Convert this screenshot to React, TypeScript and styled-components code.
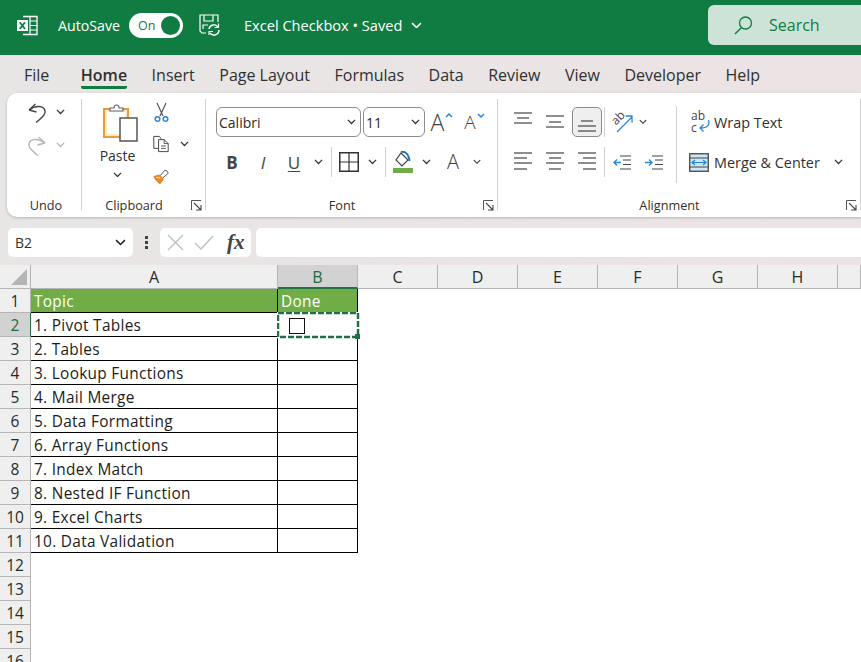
import React from "react";
import styled, { createGlobalStyle } from "styled-components";

const uiFont = `"Open Sans", "Noto Sans", "Liberation Sans", sans-serif`;
const GREEN = "#107c41";

const Global = createGlobalStyle`
  html, body { margin: 0; padding: 0; background: #fff; }
  * { box-sizing: border-box; }
`;

const Page = styled.div`
  width: 861px;
  height: 662px;
  overflow: hidden;
  font-family: ${uiFont};
  color: #303030;
  background: linear-gradient(90deg, #e8e6e5, #ece3e4);
`;

/* title bar */
const TitleBar = styled.header`
  height: 55px;
  background: ${GREEN};
  display: flex;
  align-items: center;
  color: #fff;
  padding: 0 0 5px 17px;
`;
const AutoSaveLabel = styled.span`
  font-size: 14.2px;
  margin-left: 20px;
  width: 71px;
`;
const Toggle = styled.div`
  width: 54px;
  height: 25px;
  border-radius: 13px;
  background: #fff;
  color: ${GREEN};
  font-size: 12.5px;
  display: flex;
  align-items: center;
  justify-content: space-between;
  padding: 0 3px 0 9px;
`;
const ToggleKnob = styled.i`
  width: 19px;
  height: 19px;
  border-radius: 50%;
  background: ${GREEN};
`;
const DocTitle = styled.span`
  font-size: 14.6px;
  margin-left: 24px;
  width: 167px;
  white-space: nowrap;
`;
const SearchBox = styled.div`
  margin-left: auto;
  width: 153px;
  height: 40px;
  background: #cee3d7;
  border-radius: 6px 0 0 6px;
  color: ${GREEN};
  font-size: 16px;
  display: flex;
  align-items: center;
  gap: 16px;
  padding-left: 26px;
`;

/* tabs */
const TabBar = styled.nav`
  height: 38px;
  display: flex;
  gap: 24.5px;
  padding: 8px 0 0 24px;
  font-size: 16px;
`;
const Tab = styled.span<{ $active?: boolean; $extra?: number }>`
  height: 26px;
  line-height: 24px;
  white-space: nowrap;
  margin-right: ${(p) => p.$extra ?? 0}px;
  font-weight: ${(p) => (p.$active ? 600 : 400)};
  border-bottom: 3px solid ${(p) => (p.$active ? GREEN : "transparent")};
  border-radius: 0 0 2px 2px;
`;

/* ribbon */
const Ribbon = styled.section`
  height: 124px;
  margin-left: 7px;
  background: #fff;
  border-radius: 10px 0 0 10px;
  box-shadow: 0 1px 3px rgba(0, 0, 0, 0.22);
  display: flex;
  font-size: 13px;
`;
const Group = styled.div<{ $w: number; $pad?: number }>`
  position: relative;
  width: ${(p) => p.$w}px;
  flex: none;
  display: flex;
  flex-direction: column;
  padding-top: ${(p) => p.$pad ?? 14}px;
  &::after {
    content: "";
    position: absolute;
    right: 0;
    top: 6px;
    bottom: 7px;
    width: 1px;
    background: #d0d0d0;
  }
`;
const GroupBody = styled.div`
  flex: 1;
  min-height: 0;
  display: flex;
`;
const GroupLabel = styled.div<{ $right?: number; $shift?: number }>`
  height: 24px;
  line-height: 24px;
  text-align: center;
  font-size: 12.7px;
  padding-right: ${(p) => p.$right ?? 20}px;
  padding-left: ${(p) => p.$shift ?? 0}px;
`;
const Launcher = styled.span`
  position: absolute;
  right: 4px;
  bottom: 6px;
  display: flex;
`;
const Rows = styled.div<{ $gap?: number; $left?: number; $top?: number; $w?: number }>`
  display: flex;
  flex-direction: column;
  gap: ${(p) => p.$gap ?? 10}px;
  margin-left: ${(p) => p.$left ?? 0}px;
  margin-top: ${(p) => p.$top ?? 0}px;
  ${(p) => (p.$w ? `width: ${p.$w}px; flex: none;` : "")}
`;
const Row = styled.div`
  display: flex;
  align-items: center;
  height: 30px;
`;
const Slot = styled.div<{ $w: number; $h?: number }>`
  width: ${(p) => p.$w}px;
  height: ${(p) => p.$h ?? 30}px;
  flex: none;
  display: flex;
  align-items: center;
  justify-content: center;
`;
const Sep = styled.i`
  width: 1px;
  height: 30px;
  background: #d0d0d0;
`;
const TallSep = styled.i`
  width: 1px;
  height: 77px;
  margin-top: -1px;
  flex: none;
  background: #d0d0d0;
`;
const Pressed = styled.div`
  width: 30px;
  height: 30px;
  border: 1px solid #8a8a8a;
  border-radius: 5px;
  background: #efefef;
  display: flex;
  align-items: center;
  justify-content: center;
`;
const PasteColumn = styled.div`
  width: 71px;
  flex: none;
  display: flex;
  flex-direction: column;
  align-items: center;
  font-size: 14px;
  svg:first-child {
    margin-left: 6px;
  }
`;
const PasteText = styled.span`
  margin: 4px 0 6px;
  line-height: 20px;
`;
const Select = styled.div<{ $w: number }>`
  width: ${(p) => p.$w}px;
  height: 30px;
  flex: none;
  border: 1px solid #8d8d8d;
  border-radius: 6px;
  display: flex;
  align-items: center;
  justify-content: space-between;
  padding: 0 4px 0 2px;
  font-size: 14px;
  color: #2b2b2b;
`;
const WrapLabel = styled.span`
  font-size: 14.4px;
  white-space: nowrap;
`;
const BoldGlyph = styled.span<{ $italic?: boolean; $under?: boolean }>`
  font-size: 17px;
  line-height: 1;
  font-weight: ${(p) => (p.$italic || p.$under ? 400 : 700)};
  font-style: ${(p) => (p.$italic ? "italic" : "normal")};
  text-decoration: ${(p) => (p.$under ? "underline" : "none")};
  text-underline-offset: 2px;
  color: #444;
`;
const BigA = styled.span<{ $size: number }>`
  font-size: ${(p) => p.$size}px;
  line-height: 1;
  color: #404040;
  font-weight: 300;
`;
const OrientBox = styled.div`
  position: relative;
  width: 21px;
  height: 21px;
  svg {
    position: absolute;
    left: 0;
    top: 0;
  }
`;
const OrientText = styled.span`
  position: absolute;
  left: -1px;
  top: 0;
  font-size: 12px;
  line-height: 12px;
  color: #444;
  transform: rotate(-45deg);
`;
const WrapBox = styled.div`
  position: relative;
  width: 19px;
  height: 24px;
  font-size: 12px;
  line-height: 12px;
  color: #444;
  svg {
    position: absolute;
    left: 0;
    top: 0;
  }
`;
const WrapLetters = styled.span`
  display: block;
  white-space: nowrap;
`;

/* formula bar */
const FormulaBar = styled.div`
  height: 48px;
  padding: 11px 0 8px 8px;
  display: flex;
  align-items: stretch;
`;
const NameBox = styled.div`
  width: 125px;
  background: #fff;
  border-radius: 5px;
  display: flex;
  align-items: center;
  justify-content: space-between;
  padding: 0 7px 0 7px;
  font-size: 14px;
`;
const Dots = styled.div`
  width: 27px;
  display: flex;
  flex-direction: column;
  align-items: center;
  justify-content: center;
  gap: 2px;
  i {
    width: 3px;
    height: 3px;
    background: #444;
  }
`;
const FxBox = styled.div`
  width: 91px;
  background: #fff;
  border-radius: 5px;
  display: flex;
  align-items: center;
  gap: 10px;
  padding-left: 7px;
`;
const FxText = styled.span`
  font-family: "Liberation Serif", serif;
  font-style: italic;
  font-weight: 700;
  font-size: 21px;
  color: #444;
  margin-left: 3px;
`;
const FormulaInput = styled.div`
  flex: 1;
  margin-left: 5px;
  background: #fff;
  border-radius: 5px 0 0 5px;
`;

/* sheet */
const Sheet = styled.main`
  height: 397px;
  background: #fff;
`;
const HeadRow = styled.div`
  display: flex;
  height: 24px;
`;
const Corner = styled.div`
  width: 31px;
  flex: none;
  background: #efefef;
  border-right: 1px solid #b5b5b5;
  border-bottom: 1px solid #b5b5b5;
  display: flex;
  align-items: flex-end;
  justify-content: flex-end;
  padding: 0 3px 3px 0;
`;
const ColHead = styled.div<{ $w: number; $sel?: boolean }>`
  width: ${(p) => p.$w}px;
  flex: none;
  background: ${(p) => (p.$sel ? "#d2d2d2" : "#efefef")};
  color: ${(p) => (p.$sel ? "#1c6b45" : "#2a2a2a")};
  border-right: 1px solid #b5b5b5;
  border-bottom: ${(p) => (p.$sel ? "2px solid #217346" : "1px solid #b5b5b5")};
  text-align: center;
  font-size: 16px;
  line-height: 24px;
`;
const SheetRow = styled.div`
  display: flex;
  height: 24px;
`;
const RowHead = styled.div<{ $sel?: boolean }>`
  width: 31px;
  flex: none;
  background: ${(p) => (p.$sel ? "#d2d2d2" : "#efefef")};
  color: ${(p) => (p.$sel ? "#1c6b45" : "#2a2a2a")};
  border-right: ${(p) => (p.$sel ? "1px solid #217346" : "1px solid #b5b5b5")};
  border-bottom: 1px solid #b5b5b5;
  text-align: center;
  font-size: 15.5px;
  line-height: 24px;
`;
const Cell = styled.div<{ $w: number; $header?: boolean; $ruled?: boolean }>`
  position: relative;
  width: ${(p) => p.$w}px;
  flex: none;
  padding-left: 3px;
  font-size: 15.4px;
  letter-spacing: 0.3px;
  line-height: 25px;
  white-space: nowrap;
  color: ${(p) => (p.$header ? "#fff" : "#1c1c1c")};
  background: ${(p) => (p.$header ? "#70ad47" : "#fff")};
  border-right: 1px solid ${(p) => (p.$ruled ? "#000" : "transparent")};
  border-bottom: 1px solid ${(p) => (p.$ruled ? "#000" : "transparent")};
`;
const Ants = styled.svg`
  position: absolute;
  left: -1px;
  top: -1px;
  z-index: 2;
`;
const CheckBox = styled.i`
  position: absolute;
  left: 11px;
  top: 5px;
  width: 16px;
  height: 16px;
  border: 1px solid #111;
  background: #fff;
  z-index: 3;
`;

const Chevron = ({ size = 9, color = "#333" }: { size?: number; color?: string }) => (
  <svg width={size} height={size * 0.6} viewBox="0 0 10 6" fill="none">
    <path d="M1 1l4 4 4-4" stroke={color} strokeWidth="1.4" />
  </svg>
);

const ExcelLogo = () => (
  <svg width="21" height="21" viewBox="0 0 21 21" fill="none" style={{ flex: "none" }}>
    <path d="M6 1.500h14v18H6" stroke="#fff" strokeWidth="1.300" />
    <path d="M13 1.500v18M13 6h7M13 10.500h7M13 15h7" stroke="#fff" strokeWidth="1.200" />
    <rect x="0" y="5" width="11" height="11" fill="#fff" />
    <path d="M2.800 7.200l5.200 6.800M8 7.200l-5.200 6.800" stroke={GREEN} strokeWidth="1.800" />
  </svg>
);

const SaveSync = () => (
  <svg width="21" height="22" viewBox="0 0 21 22" fill="none" style={{ flex: "none", marginLeft: 16 }}>
    <path d="M7 19H3l-2-2V1h18v7" stroke="#fff" strokeWidth="1.200" />
    <path d="M5 1v6h9V1M4 15v-4h5" stroke="#fff" strokeWidth="1.200" />
    <path d="M10 15a5 5 0 0 1 9-2M20 16a5 5 0 0 1-9 3" stroke="#fff" strokeWidth="1.400" />
    <path d="M19.500 9.500v4h-4M10 21v-3.500h4" stroke="#fff" strokeWidth="1.200" />
  </svg>
);

const SearchIcon = () => (
  <svg width="19" height="19" viewBox="0 0 19 19" fill="none">
    <circle cx="11.500" cy="7" r="6" stroke={GREEN} strokeWidth="1.300" />
    <path d="M7.500 11.500L1 18" stroke={GREEN} strokeWidth="1.400" />
  </svg>
);

const UndoIcon = ({ color = "#444", flip }: { color?: string; flip?: boolean }) => (
  <svg width="20" height="21" viewBox="0 0 20 21" fill="none" style={flip ? { transform: "scaleX(-1)" } : undefined}>
    <path d="M2 8l6.500-6M2 8l7.500 2" stroke={color} strokeWidth="1.400" />
    <path d="M2.500 8C8 3 17 3.500 18 9c.6 3.500-3 6.500-9 11.500" stroke={color} strokeWidth="1.400" />
  </svg>
);

const ClipboardIcon = () => (
  <svg width="35" height="39" viewBox="0 0 35 39" fill="none">
    <rect x="1" y="6" width="24" height="28" fill="#fdeccf" stroke="#ed9a3c" strokeWidth="2" />
    <rect x="4" y="9" width="18" height="22" fill="#fff" />
    <path d="M7 8V5h4c0-4 5-4 5 0h4v3z" fill="#fff" stroke="#666" strokeWidth="1.200" />
    <rect x="17" y="15" width="17" height="23" fill="#fff" stroke="#555" strokeWidth="1.500" />
  </svg>
);

const ScissorsIcon = () => (
  <svg width="15" height="21" viewBox="0 0 15 21" fill="none">
    <path d="M3 1l6 13M12 1L6 14" stroke="#555" strokeWidth="1.200" />
    <circle cx="3.500" cy="17" r="2.300" stroke="#2b88d8" strokeWidth="1.500" />
    <circle cx="11.500" cy="17" r="2.300" stroke="#2b88d8" strokeWidth="1.500" />
  </svg>
);

const CopyIcon = () => (
  <svg width="21" height="22" viewBox="0 0 20 21" fill="none">
    <path d="M7 16H1V1h7l2 3" stroke="#444" strokeWidth="1.200" />
    <path d="M7 5h7l5 5v10H7z" fill="#fff" stroke="#444" strokeWidth="1.200" />
    <path d="M14 5v5h5M10 13h6M10 16h6" stroke="#444" strokeWidth="1.100" />
  </svg>
);

const BrushIcon = () => (
  <svg width="21" height="21" viewBox="0 0 20 20" fill="none">
    <path d="M9 9l6-7 3 1.500 1 2.500-7 6" fill="#fff" stroke="#555" strokeWidth="1.200" />
    <path d="M1 10l7-2 5 5-4 6C6 18 3 14 1 10z" fill="#ed8b28" stroke="#d87515" />
    <path d="M4 11l5 1" stroke="#fff" />
  </svg>
);

const LauncherIcon = () => (
  <svg width="11" height="11" viewBox="0 0 11 11" fill="none">
    <path d="M.500 10V.500H10" stroke="#555" />
    <path d="M3 3l6.500 6.500M10 5v5H5" stroke="#444" strokeWidth="1.100" />
  </svg>
);

const SmallCaret = ({ down }: { down?: boolean }) => (
  <svg width="8" height="5" viewBox="0 0 8 5" fill="none" style={{ marginBottom: 13, marginLeft: 1 }}>
    <path d={down ? "M1 1l3 3 3-3" : "M1 4l3-3 3 3"} stroke="#2b88d8" strokeWidth="1.500" />
  </svg>
);

const GridIcon = () => (
  <svg width="20" height="20" viewBox="0 0 20 20" fill="none">
    <rect x=".75" y=".75" width="18.500" height="18.500" stroke="#333" strokeWidth="1.500" />
    <path d="M10 1v18M1 10h18" stroke="#333" strokeWidth="1.200" />
  </svg>
);

const FillIcon = () => (
  <svg width="20" height="22" viewBox="0 0 20 22" fill="none">
    <path d="M8 2l7 7-6 6-6-6z" fill="#fff" stroke="#444" strokeWidth="1.200" />
    <path d="M8 1c3-1 7 1 8 6l.5 3" stroke="#1f74c0" strokeWidth="2" />
    <rect y="17" width="20" height="5" fill="#70ad47" />
  </svg>
);

// alignment glyphs, one [y, x1, x2] per line
const Lines = ({ rows }: { rows: [number, number, number][] }) => (
  <svg width="18" height="20" viewBox="0 0 18 20" fill="none">
    {rows.map(([y, a, b]) => (
      <path key={y} d={`M${a} ${y}H${b}`} stroke="#444" strokeWidth="1.200" />
    ))}
  </svg>
);

const OrientIcon = () => (
  <OrientBox>
    <OrientText>ab</OrientText>
    <svg width="21" height="21" viewBox="0 0 21 21" fill="none">
      <path d="M5 20L20 5M13.500 4h6.500v6.500" stroke="#2b88d8" strokeWidth="1.300" />
    </svg>
  </OrientBox>
);

const IndentIcon = ({ dir }: { dir: "in" | "out" }) => (
  <svg width="18" height="15" viewBox="0 0 18 15" fill="none">
    <path d="M7 1h11M10 5h8M10 9.500h8M7 14h11" stroke="#444" strokeWidth="1.200" />
    {dir === "out" ? (
      <path d="M8 7.500H1M4 4.500l-3 3 3 3" stroke="#2b88d8" strokeWidth="1.400" />
    ) : (
      <path d="M0 7.500h7M4 4.500l3 3-3 3" stroke="#2b88d8" strokeWidth="1.400" />
    )}
  </svg>
);

const WrapIcon = () => (
  <WrapBox>
    <WrapLetters>ab</WrapLetters>
    <WrapLetters>c</WrapLetters>
    <svg width="19" height="24" viewBox="0 0 19 24" fill="none">
      <path d="M17.500 10c1.500 5-1 8-8 8M12.500 14.500L9 18l3.500 3.500" stroke="#2b88d8" strokeWidth="1.300" />
    </svg>
  </WrapBox>
);

const MergeIcon = () => (
  <svg width="20" height="19" viewBox="0 0 20 19" fill="none">
    <rect x=".75" y=".75" width="18.500" height="17.500" fill="#cfe6f7" stroke="#444" strokeWidth="1.300" />
    <path d="M1 5h18M1 14h18" stroke="#444" />
    <path d="M3 9.500h14M6 7L3 9.500 6 12M14 7l3 2.500-3 2.500" stroke="#1f84d0" strokeWidth="1.200" />
  </svg>
);

const COLS = [
  { name: "A", w: 247 },
  { name: "B", w: 80, sel: true },
  { name: "C", w: 80 },
  { name: "D", w: 80 },
  { name: "E", w: 80 },
  { name: "F", w: 80 },
  { name: "G", w: 80 },
  { name: "H", w: 80 },
  { name: "", w: 23 },
];

const TOPICS = [
  "1. Pivot Tables",
  "2. Tables",
  "3. Lookup Functions",
  "4. Mail Merge",
  "5. Data Formatting",
  "6. Array Functions",
  "7. Index Match",
  "8. Nested IF Function",
  "9. Excel Charts",
  "10. Data Validation",
];

const TABS = ["Insert", "Page Layout", "Formulas", "Data", "Review", "View", "Developer", "Help"];

export default function App() {
  return (
    <Page>
      <Global />
      <TitleBar>
        <ExcelLogo />
        <AutoSaveLabel>AutoSave</AutoSaveLabel>
        <Toggle>
          On
          <ToggleKnob />
        </Toggle>
        <SaveSync />
        <DocTitle>Excel Checkbox • Saved</DocTitle>
        <Chevron size={11} color="#fff" />
        <SearchBox>
          <SearchIcon />
          Search
        </SearchBox>
      </TitleBar>

      <TabBar>
        <Tab $extra={7}>File</Tab>
        <Tab $active>Home</Tab>
        {TABS.map((t) => (
          <Tab key={t}>{t}</Tab>
        ))}
      </TabBar>

      <Ribbon>
        <Group $w={75} $pad={4}>
          <GroupBody>
            <Rows $gap={3} $left={15}>
              <Row>
                <Slot $w={30}><UndoIcon /></Slot>
                <Slot $w={16}><Chevron /></Slot>
              </Row>
              <Row>
                <Slot $w={30}><UndoIcon color="#b4b4b4" flip /></Slot>
                <Slot $w={16}><Chevron color="#b4b4b4" /></Slot>
              </Row>
            </Rows>
          </GroupBody>
          <GroupLabel $right={0} $shift={3}>Undo</GroupLabel>
        </Group>

        <Group $w={124} $pad={10}>
          <GroupBody>
            <PasteColumn>
              <ClipboardIcon />
              <PasteText>Paste</PasteText>
              <Chevron />
            </PasteColumn>
            <Rows $gap={2} $top={-6}>
              <Row><Slot $w={16}><ScissorsIcon /></Slot></Row>
              <Row>
                <Slot $w={16}><CopyIcon /></Slot>
                <Slot $w={30} $h={16}><Chevron /></Slot>
              </Row>
              <Row><Slot $w={16}><BrushIcon /></Slot></Row>
            </Rows>
          </GroupBody>
          <GroupLabel>Clipboard</GroupLabel>
          <Launcher><LauncherIcon /></Launcher>
        </Group>

        <Group $w={292}>
          <GroupBody>
            <Rows $left={10}>
              <Row>
                <Select $w={145}>
                  Calibri
                  <Chevron />
                </Select>
                <Slot $w={2} />
                <Select $w={62}>
                  11
                  <Chevron />
                </Select>
                <Slot $w={34}>
                  <BigA $size={23}>A</BigA>
                  <SmallCaret />
                </Slot>
                <Slot $w={31}>
                  <BigA $size={19}>A</BigA>
                  <SmallCaret down />
                </Slot>
              </Row>
              <Row>
                <Slot $w={32}><BoldGlyph>B</BoldGlyph></Slot>
                <Slot $w={30}><BoldGlyph $italic>I</BoldGlyph></Slot>
                <Slot $w={32}><BoldGlyph $under>U</BoldGlyph></Slot>
                <Slot $w={16}><Chevron /></Slot>
                <Slot $w={10}><Sep /></Slot>
                <Slot $w={25}><GridIcon /></Slot>
                <Slot $w={22}><Chevron /></Slot>
                <Slot $w={4}><Sep /></Slot>
                <Slot $w={32}><FillIcon /></Slot>
                <Slot $w={14}><Chevron /></Slot>
                <Slot $w={40}><BigA $size={20}>A</BigA></Slot>
                <Slot $w={8}><Chevron /></Slot>
              </Row>
            </Rows>
          </GroupBody>
          <GroupLabel>Font</GroupLabel>
          <Launcher><LauncherIcon /></Launcher>
        </Group>

        <Group $w={363}>
          <GroupBody>
            <Rows $left={9} $w={169}>
              <Row>
                <Slot $w={32}><Lines rows={[[1, 0, 18], [6, 3, 15], [11, 0, 18]]} /></Slot>
                <Slot $w={32}><Lines rows={[[4, 0, 18], [10, 3, 15], [15, 0, 18]]} /></Slot>
                <Slot $w={32}>
                  <Pressed><Lines rows={[[9, 3, 15], [14, 0, 18], [19, 0, 18]]} /></Pressed>
                </Slot>
                <Slot $w={2}><Sep /></Slot>
                <Slot $w={34}><OrientIcon /></Slot>
                <Slot $w={8}><Chevron /></Slot>
              </Row>
              <Row>
                <Slot $w={32}><Lines rows={[[1, 0, 18], [6, 0, 13], [11, 0, 18], [17, 0, 13]]} /></Slot>
                <Slot $w={32}><Lines rows={[[1, 0, 18], [6, 3, 15], [11, 0, 18], [17, 3, 15]]} /></Slot>
                <Slot $w={32}><Lines rows={[[1, 0, 18], [6, 5, 18], [11, 0, 18], [17, 5, 18]]} /></Slot>
                <Slot $w={2}><Sep /></Slot>
                <Slot $w={34}><IndentIcon dir="out" /></Slot>
                <Slot $w={30}><IndentIcon dir="in" /></Slot>
              </Row>
            </Rows>
            <TallSep />
            <Rows $left={12}>
              <Row>
                <Slot $w={2} />
                <Slot $w={19}><WrapIcon /></Slot>
                <Slot $w={4} />
                <WrapLabel>Wrap Text</WrapLabel>
              </Row>
              <Row>
                <Slot $w={20}><MergeIcon /></Slot>
                <Slot $w={5} />
                <WrapLabel>Merge &amp; Center</WrapLabel>
                <Slot $w={38}><Chevron /></Slot>
              </Row>
            </Rows>
          </GroupBody>
          <GroupLabel>Alignment</GroupLabel>
          <Launcher><LauncherIcon /></Launcher>
        </Group>
      </Ribbon>

      <FormulaBar>
        <NameBox>
          B2
          <Chevron size={11} color="#222" />
        </NameBox>
        <Dots>
          <i />
          <i />
          <i />
        </Dots>
        <FxBox>
          <svg width="17" height="17" viewBox="0 0 17 17" fill="none">
            <path d="M1 1l15 15M16 1L1 16" stroke="#bdbdbd" strokeWidth="1.300" />
          </svg>
          <svg width="20" height="15" viewBox="0 0 20 15" fill="none">
            <path d="M1 8l6 6L19 1" stroke="#bdbdbd" strokeWidth="1.300" />
          </svg>
          <FxText>fx</FxText>
        </FxBox>
        <FormulaInput />
      </FormulaBar>

      <Sheet>
        <HeadRow>
          <Corner>
            <svg width="16" height="16" viewBox="0 0 16 16">
              <path d="M16 0v16H0z" fill="#b5b5b5" />
            </svg>
          </Corner>
          {COLS.map((c) => (
            <ColHead key={c.name} $w={c.w} $sel={c.sel}>{c.name}</ColHead>
          ))}
        </HeadRow>
        <SheetRow>
          <RowHead>1</RowHead>
          <Cell $w={247} $header $ruled>Topic</Cell>
          <Cell $w={80} $header $ruled>Done</Cell>
        </SheetRow>
        {TOPICS.map((t, i) => (
          <SheetRow key={t}>
            <RowHead $sel={i === 0}>{i + 2}</RowHead>
            <Cell $w={247} $ruled>{t}</Cell>
            <Cell $w={80} $ruled>
              {i === 0 && (
                <>
                  <Ants width="83" height="27" viewBox="0 0 83 27" fill="none">
                    <rect x="1" y="1" width="80" height="24" stroke="#fff" strokeWidth="2.500" />
                    <rect x="1" y="1" width="80" height="24" stroke="#1f6f47" strokeWidth="2.500" strokeDasharray="6 2" />
                    <rect x="78" y="22" width="5" height="5" fill="#1f6f47" />
                  </Ants>
                  <CheckBox />
                </>
              )}
            </Cell>
          </SheetRow>
        ))}
        {[12, 13, 14, 15, 16].map((n) => (
          <SheetRow key={n}>
            <RowHead>{n}</RowHead>
          </SheetRow>
        ))}
      </Sheet>
    </Page>
  );
}
